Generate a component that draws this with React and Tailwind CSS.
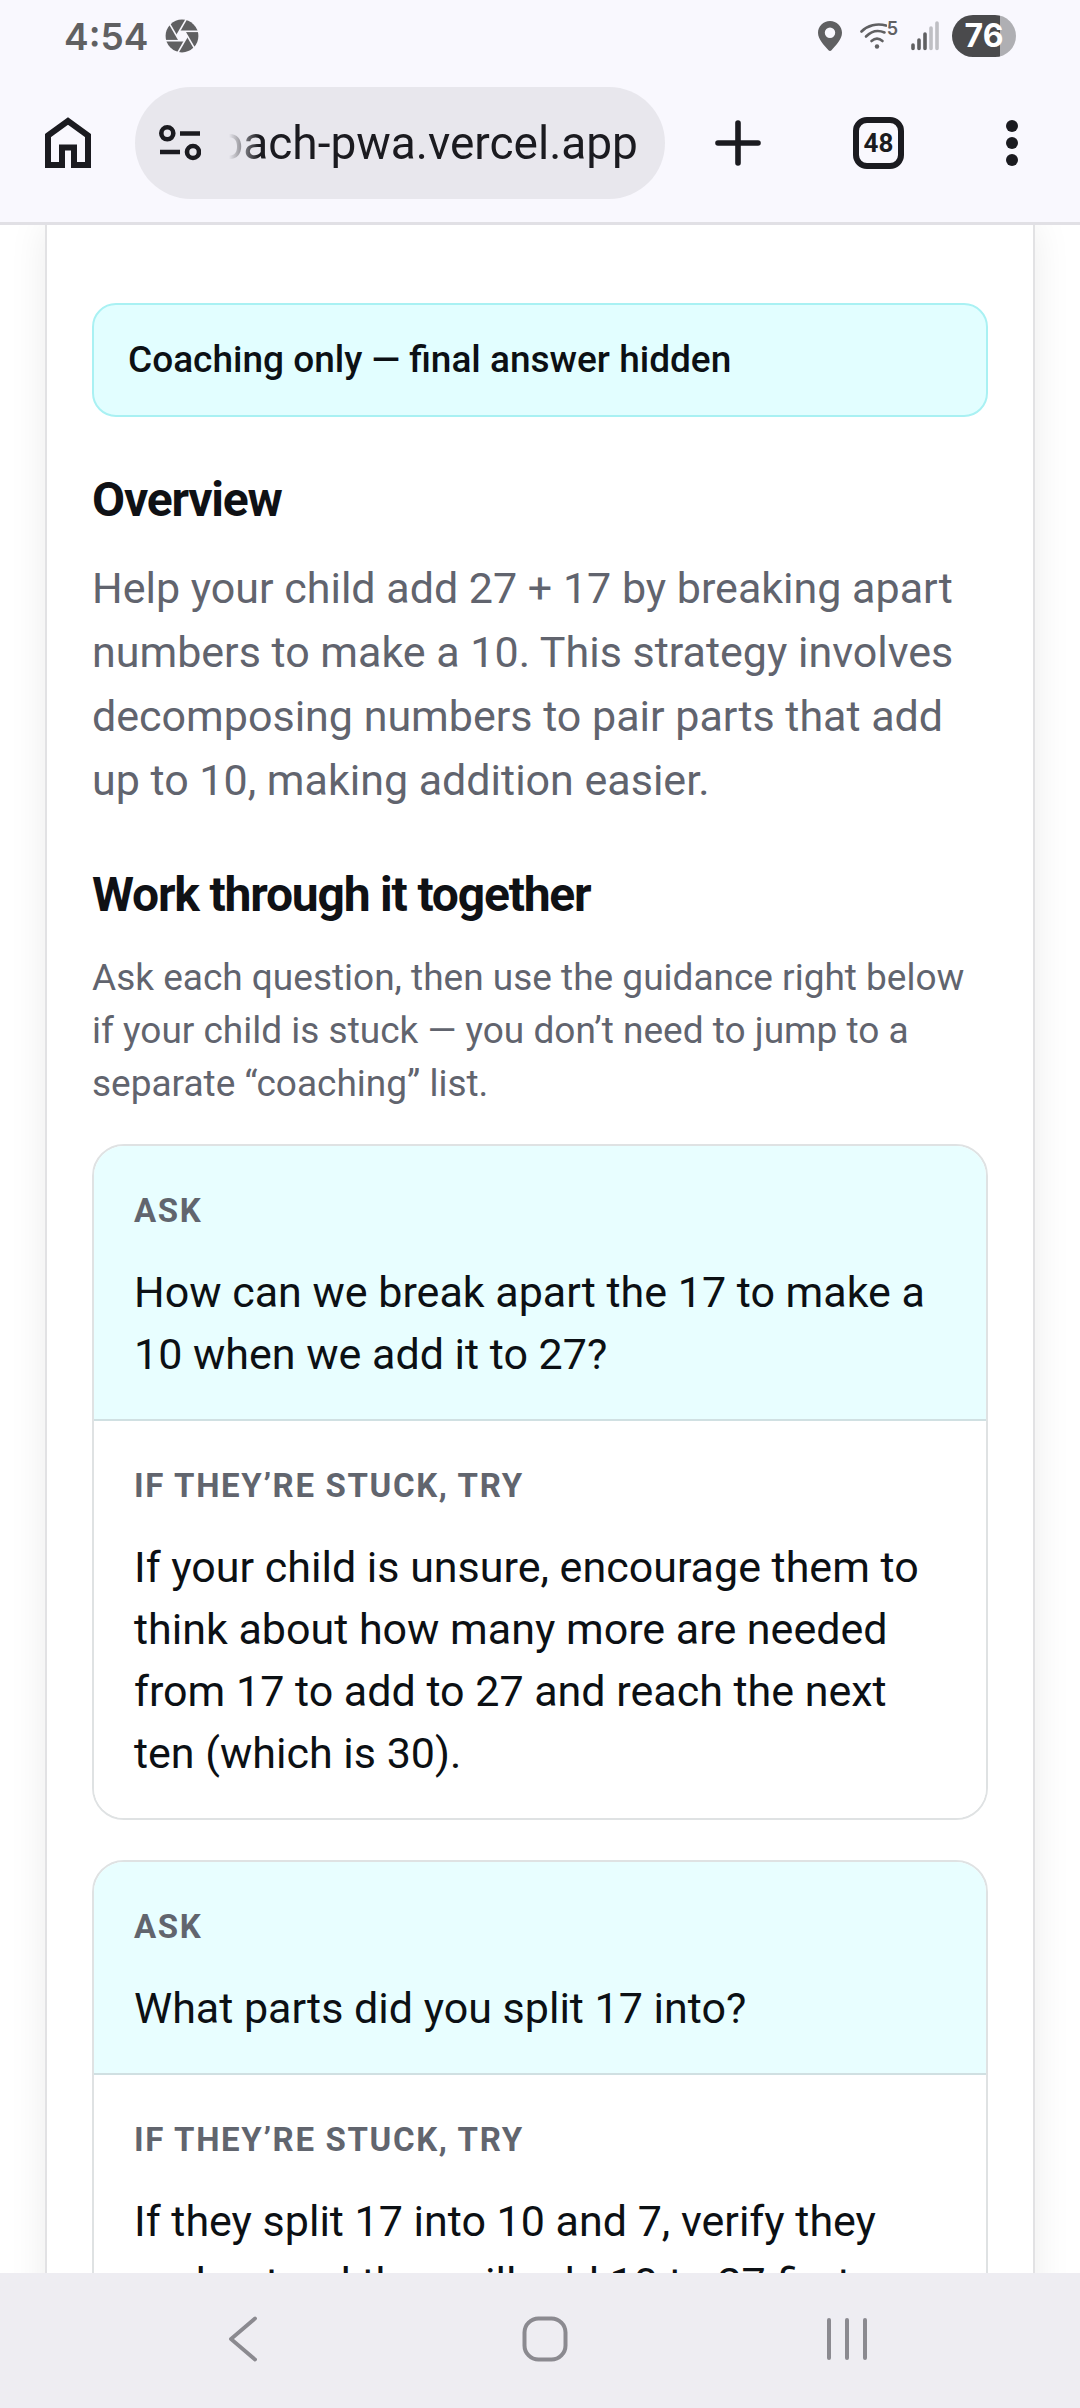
import React, { useState } from 'react';

const steps = [
  {
    ask: 'How can we break apart the 17 to make a 10 when we add it to 27?',
    hint: 'If your child is unsure, encourage them to think about how many more are needed from 17 to add to 27 and reach the next ten (which is 30).',
  },
  {
    ask: 'What parts did you split 17 into?',
    hint: 'If they split 17 into 10 and 7, verify they understand they will add 10 to 27 first.',
  },
];

const ApertureIcon = () => (
  <svg className="w-[34px] h-[34px]" viewBox="-17 -17 34 34" aria-hidden="true">
    <circle r="16.4" fill="#606062" />
    <polygon points="-2.7,-4.7 2.7,-4.7 5.4,0 2.7,4.7 -2.7,4.7 -5.4,0" fill="#f9f8fe" />
    {[0, 60, 120, 180, 240, 300].map((deg) => (
      <path key={deg} d="M-2.7 -4.7H17" stroke="#f9f8fe" strokeWidth="1.6" transform={`rotate(${deg})`} />
    ))}
  </svg>
);

const StatusIcons = () => (
  <div className="flex items-center">
    <svg className="w-6 h-[30px]" viewBox="0 0 24 30" aria-hidden="true">
      <path fill="#606062" fillRule="evenodd" d="M12 0C5.3 0 0 5.2 0 11.8C0 18.5 6 24 10.5 29.2C11.4 30.2 12.6 30.2 13.5 29.2C18 24 24 18.5 24 11.8C24 5.2 18.7 0 12 0ZM12 6.6A5.2 5.2 0 1 1 12 17A5.2 5.2 0 1 1 12 6.6Z" />
    </svg>
    <div className="flex ml-[18px]">
      <svg className="w-[27px] h-[28px]" viewBox="0 0 27 28" fill="none" stroke="#606062" strokeWidth="2.6" aria-hidden="true">
        <path strokeLinecap="round" d="M1.5 9.5C7.5 3.5 17 0.8 26 3.6" />
        <path strokeLinecap="round" d="M6 14.5C11.5 9 18 7.6 24.5 10.5" />
        <path strokeLinecap="round" d="M11.5 19C15 16 19 16 22.5 19" />
        <circle cx="17" cy="24.5" r="2.2" fill="#606062" stroke="none" />
      </svg>
      <span className="text-[18px] leading-[14px] font-semibold text-[#606062] font-['Inter',sans-serif]">5</span>
    </div>
    <svg className="w-[28px] h-[30px] ml-[13px]" viewBox="0 0 28 30" strokeWidth="3.6" strokeLinecap="round" aria-hidden="true">
      <path stroke="#606062" d="M2 24V27.5M8 19V27.5M14 13V27.5" />
      <path stroke="#bfbfc4" d="M20 7V27.5M26 2V27.5" />
    </svg>
    <div className="ml-[13px] w-16 h-[42px] rounded-full bg-[linear-gradient(to_right,#4a4a4c_75%,#afafb3_75%)] flex items-center justify-center text-[32px] font-bold text-white font-['Inter',sans-serif]">
      76
    </div>
  </div>
);

const StatusBar = () => (
  <div className="h-[72px] pl-16 pr-16 flex items-center justify-between">
    <div className="flex items-center gap-[17px]">
      <span className="text-[37px] leading-none font-semibold text-[#606062] font-['Inter',sans-serif]">4:54</span>
      <ApertureIcon />
    </div>
    <StatusIcons />
  </div>
);

const Toolbar = () => {
  const [url, setUrl] = useState('oach-pwa.vercel.app');

  return (
    <div className="pt-[15px] pb-[23px] pl-[45px] pr-[62px] flex items-center">
      <button type="button" aria-label="Home">
        <svg className="block w-[46px] h-[52px]" viewBox="0 0 46 52" fill="none" stroke="#1b1b20" strokeWidth="6" aria-hidden="true">
          <path d="M3 18.5L23 4L43 18.5V48H29V30.5H17V48H3Z" />
        </svg>
      </button>

      <div className="ml-11 h-28 min-w-0 flex-1 rounded-full bg-[#e8e7ed] flex items-center px-6">
        <button type="button" aria-label="Site settings" className="shrink-0">
          <svg className="block w-[42px] h-[36px]" viewBox="0 0 42 36" fill="none" stroke="#1b1b20" strokeWidth="4.6" aria-hidden="true">
            <circle cx="8.3" cy="8.3" r="6" />
            <circle cx="34" cy="27" r="6" />
            <path d="M21 8.5H41M1 27H21" />
          </svg>
        </button>
        <input
          type="text"
          aria-label="Address"
          value={url}
          onChange={(e) => setUrl(e.target.value)}
          className="ml-4 min-w-0 flex-1 bg-transparent outline-none text-[46px] leading-[60px] text-[#1b1b20] font-['Roboto',sans-serif] [mask-image:linear-gradient(to_right,transparent_12px,black_42px)]"
        />
      </div>

      <button type="button" aria-label="New tab" className="ml-[50px]">
        <svg className="block w-[46px] h-[46px]" viewBox="0 0 46 46" stroke="#1b1b20" strokeWidth="5.6" strokeLinecap="round" aria-hidden="true">
          <path d="M23 3V43M3 23H43" />
        </svg>
      </button>
      <button type="button" aria-label="Switch tabs" className="ml-[92px] w-[51px] h-[52px] rounded-[14px] border-6 border-[#1b1b20] flex items-center justify-center text-[26px] leading-none font-bold text-[#1b1b20] font-['Roboto',sans-serif]">
        48
      </button>
      <button type="button" aria-label="More options" className="ml-[102px]">
        <svg className="block w-3 h-[46px]" viewBox="0 0 12 46" fill="#1b1b20" aria-hidden="true">
          <circle cx="6" cy="6" r="6" />
          <circle cx="6" cy="23" r="6" />
          <circle cx="6" cy="40" r="6" />
        </svg>
      </button>
    </div>
  );
};

const StepSection = ({ label, children, className }) => (
  <div className={`px-10 py-[34px] ${className}`}>
    <h3 className="text-[33px] leading-[62px] font-bold uppercase tracking-wider text-[#61656e]">{label}</h3>
    <p className="mt-[19px] text-[43px] leading-[62px] text-[#0c1014]">{children}</p>
  </div>
);

const StepCard = ({ step }) => (
  <li className="rounded-[32px] border-2 border-[#dfe2e3] overflow-hidden">
    <StepSection label="Ask" className="bg-[#e8feff] border-b-2 border-[#d0e0e2]">{step.ask}</StepSection>
    <StepSection label="If they’re stuck, try" className="bg-white">{step.hint}</StepSection>
  </li>
);

const NavBar = () => (
  <nav className="shrink-0 h-[135px] bg-[#eeedf2] pl-[92px] pr-[82px] pb-[3px] grid grid-cols-3 items-center justify-items-center">
    <button type="button" aria-label="Back">
      <svg className="block w-[28px] h-[46px]" viewBox="0 0 28 46" fill="none" stroke="#8b8a90" strokeWidth="3.8" strokeLinecap="round" strokeLinejoin="round" aria-hidden="true">
        <path d="M26 2.5L2 23L26 43.5" />
      </svg>
    </button>
    <button type="button" aria-label="Home screen">
      <svg className="block w-[46px] h-[46px]" viewBox="0 0 46 46" fill="none" stroke="#8b8a90" strokeWidth="4" aria-hidden="true">
        <rect x="2.5" y="2.5" width="41" height="41" rx="14" />
      </svg>
    </button>
    <button type="button" aria-label="Recent apps">
      <svg className="block w-[40px] h-[46px]" viewBox="0 0 40 46" stroke="#8b8a90" strokeWidth="4" strokeLinecap="round" aria-hidden="true">
        <path d="M2 4V42M20 4V42M38 4V42" />
      </svg>
    </button>
  </nav>
);

const App = () => {
  return (
    <div className="h-screen flex flex-col overflow-hidden bg-white font-['Roboto',sans-serif]">
      <header className="shrink-0 bg-[#f9f8fe] border-b-3 border-[#e1e0e5]">
        <StatusBar />
        <Toolbar />
      </header>

      <main className="flex-1 min-h-0 overflow-hidden px-[45px]">
        <article className="border-x-2 border-[#e2e2e4] bg-white px-[45px] pt-[78px] pb-[45px] shadow-[0_0_36px_rgba(0,0,0,0.08)]">
          <p className="rounded-[24px] border-2 border-[#a9f1f3] bg-[#e2feff] px-[34px] py-[26px] text-[37px] leading-[58px] font-medium text-[#0c1014]">
            Coaching only — final answer hidden
          </p>

          <h2 className="mt-[53px] text-[48px] leading-[60px] font-bold tracking-tight text-[#0f1115]">Overview</h2>
          <p className="mt-[26px] text-[43px] leading-[64px] text-[#61646e]">
            Help your child add 27 + 17 by breaking apart numbers to make a 10. This strategy involves decomposing numbers to pair parts that add up to 10, making addition easier.
          </p>

          <h2 className="mt-[53px] text-[48px] leading-[60px] font-bold tracking-tight text-[#0f1115]">Work through it together</h2>
          <p className="mt-[26px] text-[37px] leading-[53px] text-[#61646e]">
            Ask each question, then use the guidance right below if your child is stuck — you don’t need to jump to a separate “coaching” list.
          </p>

          <ol className="mt-[34px] flex flex-col gap-10">
            {steps.map((step, idx) => (
              <StepCard key={idx} step={step} />
            ))}
          </ol>
        </article>
      </main>

      <NavBar />
    </div>
  );
};

export default App;
